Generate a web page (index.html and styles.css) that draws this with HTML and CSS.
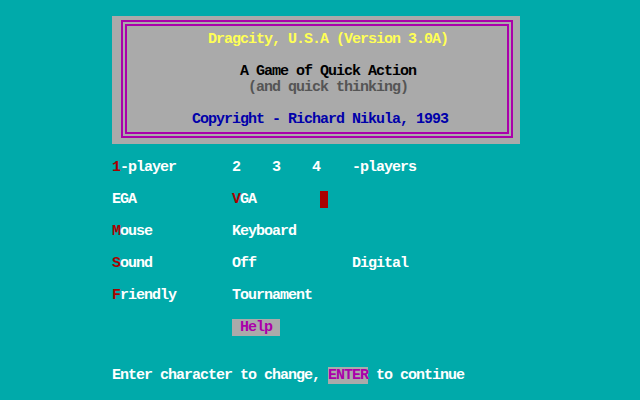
FILE: index.html
```html
<!DOCTYPE html>
<html>
<head>
<meta charset="utf-8">
<link rel="stylesheet" href="styles.css">
</head>
<body>
<div class="screen">
  <div class="row"></div>
  <div class="title-box">
    <div class="row"></div>
    <div class="row"><span class="yellow">            Dragcity, U.S.A (Version 3.0A)</span></div>
    <div class="row"></div>
    <div class="row"><span class="black">                A Game of Quick Action</span></div>
    <div class="row"><span class="dgray">                 (and quick thinking)</span></div>
    <div class="row"></div>
    <div class="row"><span class="blue">          Copyright - Richard Nikula, 1993</span></div>
    <div class="row"></div>
  </div>
  <div class="row"></div>
  <div class="row"><span class="key">1</span>-player       2    3    4    -players</div>
  <div class="row"></div>
  <div class="row">EGA            <span class="key">V</span>GA        <span class="cursor"> </span></div>
  <div class="row"></div>
  <div class="row"><span class="key">M</span>ouse          Keyboard</div>
  <div class="row"></div>
  <div class="row"><span class="key">S</span>ound          Off            Digital</div>
  <div class="row"></div>
  <div class="row"><span class="key">F</span>riendly       Tournament</div>
  <div class="row"></div>
  <div class="row">               <span class="button"> Help </span></div>
  <div class="row"></div>
  <div class="row"></div>
  <div class="row">Enter character to change, <span class="button">ENTER</span> to continue</div>
  <div class="row"></div>
</div>
</body>
</html>
```
FILE: styles.css
```css
html, body {
  margin: 0;
  padding: 0;
  background: #00AAAA;
}
.screen {
  width: 640px;
  height: 400px;
  overflow: hidden;
  background: #00AAAA;
  color: #FFFFFF;
  font-family: "Liberation Mono", "DejaVu Sans Mono", monospace;
  font-weight: bold;
  font-size: 15px;
  letter-spacing: -1px;
}
.row {
  height: 16px;
  line-height: 16px;
  white-space: pre;
  padding-left: 112px;
  box-sizing: border-box;
}
.title-box {
  position: relative;
  margin-left: 112px;
  width: 408px;
  height: 128px;
  background: #AAAAAA;
}
.title-box .row {
  padding-left: 0;
}
.title-box::before {
  content: "";
  position: absolute;
  left: 9px;
  top: 4px;
  right: 7px;
  bottom: 6px;
  border: 6px double #AA00AA;
}
.yellow { color: #FFFF55; }
.black { color: #000000; }
.dgray { color: #555555; }
.blue { color: #0000AA; }
.key { color: #AA0000; }
.cursor { background: #AA0000; }
.button {
  background: #AAAAAA;
  color: #AA00AA;
}
```
